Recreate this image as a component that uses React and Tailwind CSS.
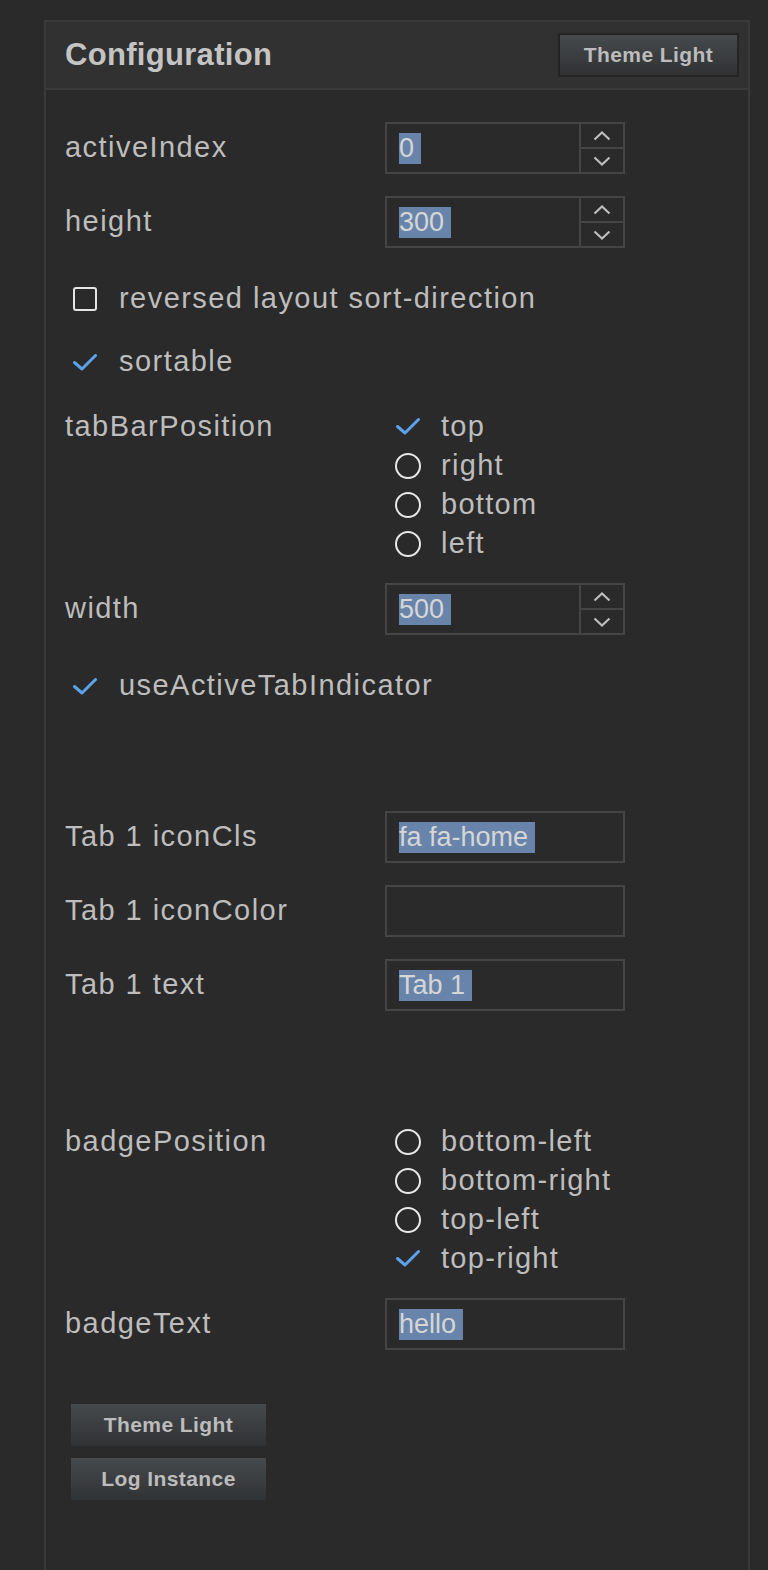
import { useState } from 'react'

const font = { fontFamily: '"Liberation Sans", Arial, sans-serif' }

function Check() {
  return (
    <svg width="24" height="17" viewBox="0 0 24 17" className="block">
      <path d="M1.5 8.5 L9 15 L22.5 1.5" fill="none" stroke="#5ca2e8" strokeWidth="3" strokeLinecap="round" strokeLinejoin="round" />
    </svg>
  )
}

function Chevron({ up }) {
  return (
    <svg width="18" height="10" viewBox="0 0 18 10" className="block">
      <path d={up ? 'M1.5 8.5 L9 1.5 L16.5 8.5' : 'M1.5 1.5 L9 8.5 L16.5 1.5'} fill="none" stroke="#bdbdbd" strokeWidth="2.2" />
    </svg>
  )
}

function Selected({ children }) {
  return <span className="bg-[#6884aa] text-[#d6d6d6] pr-[7px] leading-[31px] inline-block">{children}</span>
}

function Field({ label, value, spin, className = '' }) {
  return (
    <div className={`flex items-center h-[52px] ${className}`}>
      <div className="w-[320px] text-[29px] text-[#bdbdbd] tracking-[0.05em]">{label}</div>
      <div className="flex w-[240px] h-[52px] border-2 border-[#454545]">
        <div className="flex-1 flex items-center pl-[12px] text-[27px]">
          {value !== '' && <Selected>{value}</Selected>}
        </div>
        {spin && (
          <div className="w-[44px] flex flex-col border-l-2 border-[#454545]">
            <div className="flex-1 flex items-center justify-center border-b-2 border-[#454545]">
              <Chevron up />
            </div>
            <div className="flex-1 flex items-center justify-center">
              <Chevron />
            </div>
          </div>
        )}
      </div>
    </div>
  )
}

function CheckRow({ label, checked, className = '' }) {
  return (
    <div className={`flex items-center h-[40px] pl-[8px] ${className}`}>
      <div className="w-[24px] flex items-center justify-center">
        {checked ? <Check /> : <div className="w-[24px] h-[24px] rounded-[3px] border-2 border-[#e4e4e4]" />}
      </div>
      <span className="ml-[22px] text-[29px] text-[#bdbdbd] tracking-[0.05em]">{label}</span>
    </div>
  )
}

function RadioGroup({ label, options, value, className = '' }) {
  return (
    <div className={`flex items-start ${className}`}>
      <div className="w-[320px] h-[39px] flex items-center text-[29px] text-[#bdbdbd] tracking-[0.05em]">{label}</div>
      <div className="flex flex-col pl-[10px]">
        {options.map((opt) => (
          <div key={opt} className="flex items-center h-[39px]">
            <div className="w-[26px] flex items-center justify-center">
              {opt === value ? <Check /> : <div className="w-[26px] h-[26px] rounded-full border-[2.5px] border-[#e8e8e8]" />}
            </div>
            <span className="ml-[20px] text-[29px] text-[#bdbdbd] tracking-[0.045em]">{opt}</span>
          </div>
        ))}
      </div>
    </div>
  )
}

function Button({ children, className = '' }) {
  return (
    <button className={`flex items-center justify-center font-bold text-[21px] text-[#bcbcbc] tracking-[0.02em] bg-gradient-to-b from-[#474a4d] to-[#303234] ${className}`}>
      {children}
    </button>
  )
}

export default function App() {
  const [theme] = useState('Light')

  return (
    <div className="h-[1570px] overflow-hidden bg-[#2a2a2a] pt-[20px] pl-[44px] pr-[18px]" style={font}>
      <div className="h-[1560px] border-2 border-[#3a3a3a]">
        <div className="h-[68px] flex items-center justify-between pl-[19px] pr-[9px] bg-[#313131] border-b-2 border-[#3a3a3a]">
          <h2 className="text-[31px] font-bold text-[#c4c4c4] tracking-[0.01em]">Configuration</h2>
          <Button className="w-[181px] h-[44px] border-2 border-[#242424]">Theme {theme}</Button>
        </div>

        <div className="pl-[19px] flex flex-col">
          <Field className="mt-[32px]" label="activeIndex" value="0" spin />
          <Field className="mt-[22px]" label="height" value="300" spin />
          <CheckRow className="mt-[31px]" label="reversed layout sort-direction" />
          <CheckRow className="mt-[23px]" label="sortable" checked />
          <RadioGroup className="mt-[25px]" label="tabBarPosition" options={['top', 'right', 'bottom', 'left']} value="top" />
          <Field className="mt-[20px]" label="width" value="500" spin />
          <CheckRow className="mt-[31px]" label="useActiveTabIndicator" checked />

          <Field className="mt-[105px]" label="Tab 1 iconCls" value="fa fa-home" />
          <Field className="mt-[22px]" label="Tab 1 iconColor" value="" />
          <Field className="mt-[22px]" label="Tab 1 text" value="Tab 1" />

          <RadioGroup className="mt-[111px]" label="badgePosition" options={['bottom-left', 'bottom-right', 'top-left', 'top-right']} value="top-right" />
          <Field className="mt-[20px]" label="badgeText" value="hello" />

          <div className="mt-[54px] ml-[6px] flex flex-col gap-[12px]">
            <Button className="w-[195px] h-[42px]">Theme {theme}</Button>
            <Button className="w-[195px] h-[42px]">Log Instance</Button>
          </div>
        </div>
      </div>
    </div>
  )
}
